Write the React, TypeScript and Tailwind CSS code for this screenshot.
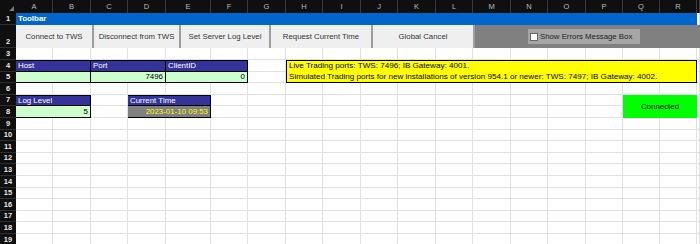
import React from 'react'

const COLS = ['A', 'B', 'C', 'D', 'E', 'F', 'G', 'H', 'I', 'J', 'K', 'L', 'M', 'N', 'O', 'P', 'Q', 'R', '']

const grid = 'border-r border-b border-[#e1e1e1]'

function Blank({ n = 1 }: { n?: number }) {
  return (
    <>
      {Array.from({ length: n }).map((_, i) => (
        <div key={i} className={grid} />
      ))}
    </>
  )
}

function RowHead({ n, bottom }: { n: number; bottom?: boolean }) {
  return (
    <div
      className={
        'flex justify-center bg-[#0f0f0f] border-b border-[#2e2e2e] text-[7.5px] font-bold text-[#e8e8e8] leading-none ' +
        (bottom ? 'items-end pb-[2px]' : 'items-center')
      }
    >
      {n}
    </div>
  )
}

function Head({ children }: { children: React.ReactNode }) {
  return (
    <div className="col-span-2 flex items-center px-[2px] bg-[#333399] border-t border-r border-b border-black text-[7.9px] text-white leading-none">
      {children}
    </div>
  )
}

function Green({ children }: { children?: React.ReactNode }) {
  return (
    <div className="col-span-2 flex items-center justify-end px-[2px] bg-[#ccffcc] border-r border-b border-black text-[7.9px] text-black leading-none">
      {children}
    </div>
  )
}

function ToolButton({ label, w }: { label: string; w: string }) {
  return (
    <div
      className={
        w +
        ' h-full flex items-center justify-center bg-[#efefef] border-r-2 border-[#9e9e9e] text-[7.8px] text-[#333333] leading-none'
      }
    >
      {label}
    </div>
  )
}

export default function App() {
  return (
    <div className="w-[700px] h-[244px] overflow-hidden bg-white font-['Liberation_Sans',Arial,sans-serif]">
      <div className="grid grid-cols-[16px_37px_38px_37px_38px_45px_37px_38px_37px_38px_37px_38px_37px_38px_37px_38px_37px_37px_37px_1fr] grid-rows-[13px_12px_23px_12px_12px_11px_12px_11px_12px_12px_11px_12px_11px_12px_12px_11px_12px_11px_12px_12px]">
        {/* column headers */}
        <div className="relative bg-[#0f0f0f]">
          <svg className="absolute right-[2px] bottom-[2px]" width="5" height="5" viewBox="0 0 5 5">
            <polygon points="5,0 5,5 0,5" fill="#7a7a7a" />
          </svg>
        </div>
        {COLS.map((c, i) => (
          <div
            key={i}
            className="flex items-center justify-center bg-[#0f0f0f] border-r border-[#3a3a3a] text-[7.5px] text-[#bdbdbd] leading-none"
          >
            {c}
          </div>
        ))}

        {/* row 1 */}
        <RowHead n={1} />
        <div className="col-span-18 flex items-center px-[2px] bg-[#0066cc] text-[7.9px] font-bold text-white leading-none">
          Toolbar
        </div>
        <Blank />

        {/* row 2 - toolbar buttons */}
        <RowHead n={2} bottom />
        <div className="col-span-19 flex">
          <ToolButton label="Connect to TWS" w="w-[78px]" />
          <ToolButton label="Disconnect from TWS" w="w-[87px]" />
          <ToolButton label="Set Server Log Level" w="w-[90px]" />
          <ToolButton label="Request Current Time" w="w-[102px]" />
          <ToolButton label="Global Cancel" w="w-[102px]" />
          <div className="flex-1 flex items-center pl-[53px] bg-[#808080]">
            <div className="w-[112px] h-[15px] flex items-center gap-[2px] pl-[2px] bg-[#a6a6a6] text-[7.8px] text-[#222222] leading-none">
              <span className="w-[8px] h-[8px] bg-white border border-[#666666]" />
              Show Errors Message Box
            </div>
          </div>
        </div>

        {/* row 3 */}
        <RowHead n={3} />
        <Blank n={19} />

        {/* row 4 */}
        <RowHead n={4} />
        <Head>Host</Head>
        <Head>Port</Head>
        <Head>ClientID</Head>
        <Blank />
        <div className="col-span-11 flex items-center px-[2px] bg-[#ffff00] border-t border-l border-r border-black text-[8.1px] text-black leading-none">
          Live Trading ports: TWS: 7496; IB Gateway: 4001.
        </div>
        <Blank />

        {/* row 5 */}
        <RowHead n={5} />
        <Green />
        <Green>7496</Green>
        <Green>0</Green>
        <Blank />
        <div className="col-span-11 flex items-center px-[2px] bg-[#ffff00] border-l border-r border-b border-black text-[8.1px] text-black leading-none">
          Simulated Trading ports for new installations of version 954.1 or newer: TWS: 7497; IB Gateway: 4002.
        </div>
        <Blank />

        {/* row 6 */}
        <RowHead n={6} />
        <Blank n={19} />

        {/* row 7 */}
        <RowHead n={7} />
        <Head>Log Level</Head>
        <Blank />
        <Head>Current Time</Head>
        <Blank n={11} />
        <div className="col-span-2 row-span-2 flex items-center justify-center bg-[#00ff00] text-[7.9px] text-black leading-none">
          Connected
        </div>
        <Blank />

        {/* row 8 */}
        <RowHead n={8} />
        <Green>5</Green>
        <Blank />
        <div className="col-span-2 flex items-center justify-end px-[2px] bg-[#808080] border-r border-b border-black text-[7.9px] text-[#ffff00] leading-none">
          2023-01-10 09:53
        </div>
        <Blank n={11} />
        <Blank />

        {/* rows 9 - 19 */}
        {[9, 10, 11, 12, 13, 14, 15, 16, 17, 18, 19].map((n) => (
          <React.Fragment key={n}>
            <RowHead n={n} />
            <Blank n={19} />
          </React.Fragment>
        ))}
      </div>
    </div>
  )
}
